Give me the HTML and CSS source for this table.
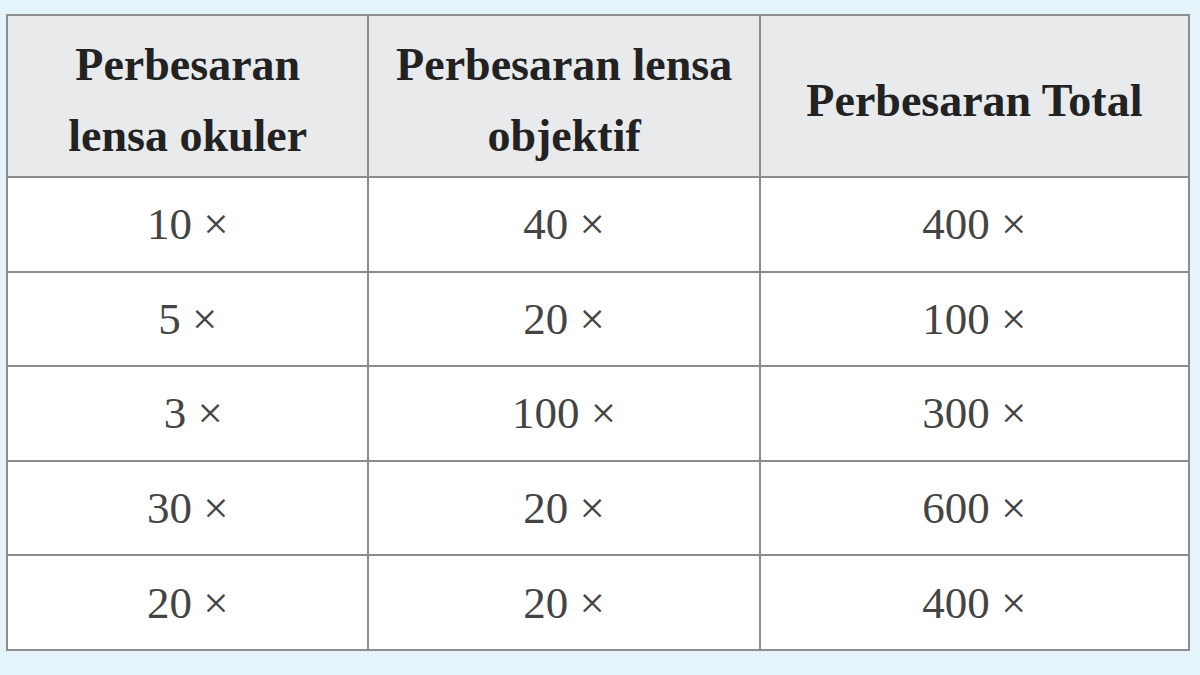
FILE: index.html
```html
<!DOCTYPE html>
<html lang="id">
<head>
<meta charset="utf-8">
<title>Perbesaran Mikroskop</title>
<link rel="stylesheet" href="styles.css">
</head>
<body>
<div class="page">
  <table class="mag">
    <colgroup>
      <col class="c1">
      <col class="c2">
      <col class="c3">
    </colgroup>
    <thead>
      <tr>
        <th>Perbesaran<br>lensa okuler</th>
        <th>Perbesaran lensa<br>objektif</th>
        <th>Perbesaran Total</th>
      </tr>
    </thead>
    <tbody>
      <tr><td>10 ×</td><td>40 ×</td><td>400 ×</td></tr>
      <tr><td>5 ×</td><td>20 ×</td><td>100 ×</td></tr>
      <tr><td>&nbsp;3 ×</td><td>100 ×</td><td>300 ×</td></tr>
      <tr><td>30 ×</td><td>20 ×</td><td>600 ×</td></tr>
      <tr><td>20 ×</td><td>20 ×</td><td>400 ×</td></tr>
    </tbody>
  </table>
</div>
</body>
</html>
```
FILE: styles.css
```css
html, body {
  margin: 0;
  padding: 0;
  background: #e5f3fb;
}
.page {
  width: 1200px;
  height: 675px;
  box-sizing: border-box;
  padding: 14px 0 0 6px;
}
.mag {
  border-collapse: collapse;
  width: 1184px;
  font-family: "Liberation Serif", "Times New Roman", serif;
  background: #ffffff;
}
.c1 { width: 362px; }
.c2 { width: 392px; }
.c3 { width: 430px; }
.mag th,
.mag td {
  border: 2px solid #8d8d8d;
  text-align: center;
  vertical-align: middle;
  padding: 0;
}
.mag th {
  background: #e9eaec;
  height: 152px;
  padding-top: 8px;
  font-size: 46px;
  line-height: 71px;
  font-weight: bold;
  color: #222222;
}
.mag td {
  height: 92.6px;
  font-size: 45px;
  line-height: 50px;
  color: #444444;
}
```
